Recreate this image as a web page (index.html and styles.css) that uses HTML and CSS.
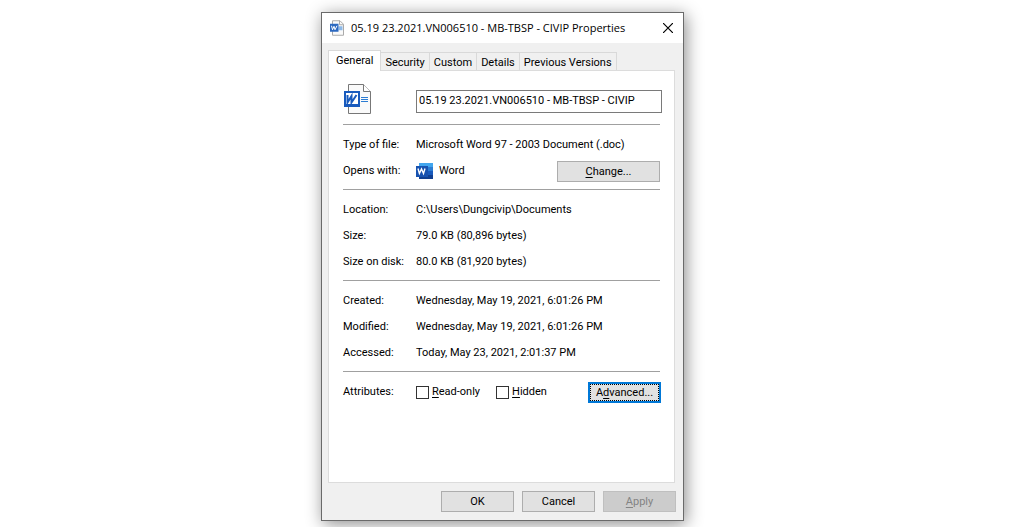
FILE: index.html
```html
<!DOCTYPE html>
<html lang="en">
<head>
    <meta charset="UTF-8">
    <meta name="viewport" content="width=device-width, initial-scale=1.0">
    <title>CIVIP Properties</title>
    <link rel="stylesheet" href="styles.css">
</head>
<body>
    <main class="dialog">
        <header class="titlebar">
            <svg class="title-icon" width="14" height="16" viewBox="0 0 28 31">
                <path d="M5 1h15l7 7v22H5z" fill="#fafafa" stroke="#aaa" stroke-width="2"/>
                <path d="M19 1v8h8" fill="none" stroke="#aaa" stroke-width="2"/>
                <path d="M17 12h8v8h-8z" fill="#8db9e8"/>
                <path d="M0 7h17v16H0z" fill="#2b68c0"/>
                <path d="M3 11l2 8 3-7 2 7 4-8" fill="none" stroke="#fff" stroke-width="2"/>
            </svg>
            <h1>05.19 23.2021.VN006510 - MB-TBSP - CIVIP Properties</h1>
            <button class="close" type="button" aria-label="Close">
                <svg width="10" height="10" viewBox="0 0 10 10">
                    <path d="M0 0l10 10M10 0L0 10" stroke="#000" stroke-width="1.2"/>
                </svg>
            </button>
        </header>

        <nav class="tabs">
            <button class="tab active" type="button">General</button>
            <button class="tab" type="button">Security</button>
            <button class="tab" type="button">Custom</button>
            <button class="tab" type="button">Details</button>
            <button class="tab" type="button">Previous Versions</button>
        </nav>

        <div class="panel">
            <div class="file">
                <svg class="file-icon" width="28" height="31" viewBox="0 0 28 31">
                    <path d="M5.500.5h15l7 7v22h-22z" fill="#fafafa" stroke="#777"/>
                    <path d="M20.500.5v7h7" fill="#fff" stroke="#777"/>
                    <path d="M18 13.500h7M18 15.500h7M18 17.500h7" stroke="#2b7cd3"/>
                    <path d="M1 7h16v16H1z" fill="#185abd"/>
                    <path d="M3 9h12v11H3z" fill="#fff"/>
                    <path d="M4.500 11v7.500l4-6.500v6.500L13.500 11" fill="none" stroke="#185abd" stroke-width="2"/>
                </svg>
                <input class="name" type="text" aria-label="File name" value="05.19 23.2021.VN006510 - MB-TBSP - CIVIP">
            </div>

            <section class="group">
                <div class="row">
                    <span class="label">Type of file:</span>
                    <span>Microsoft Word 97 - 2003 Document (.doc)</span>
                </div>
                <div class="row">
                    <span class="label">Opens with:</span>
                    <svg class="app-icon" width="17" height="16" viewBox="0 0 17 16">
                        <path d="M3 0h14v4H3z" fill="#41a5ee"/>
                        <path d="M3 4h14v4H3z" fill="#2b7cd3"/>
                        <path d="M3 8h14v4H3z" fill="#185abd"/>
                        <path d="M3 12h14v4H3z" fill="#103f91"/>
                        <path d="M0 3h12v11H0z" fill="#1752b0"/>
                        <path d="M2 5.500l1.400 5L5.500 6l2 4.500L9 5.500" fill="none" stroke="#fff" stroke-width="1.400"/>
                    </svg>
                    <span>Word</span>
                    <button class="btn change" type="button"><u>C</u>hange...</button>
                </div>
            </section>

            <section class="group">
                <div class="row">
                    <span class="label">Location:</span>
                    <span>C:\Users\Dungcivip\Documents</span>
                </div>
                <div class="row">
                    <span class="label">Size:</span>
                    <span>79.0 KB (80,896 bytes)</span>
                </div>
                <div class="row">
                    <span class="label">Size on disk:</span>
                    <span>80.0 KB (81,920 bytes)</span>
                </div>
            </section>

            <section class="group">
                <div class="row">
                    <span class="label">Created:</span>
                    <span>Wednesday, May 19, 2021, 6:01:26 PM</span>
                </div>
                <div class="row">
                    <span class="label">Modified:</span>
                    <span>Wednesday, May 19, 2021, 6:01:26 PM</span>
                </div>
                <div class="row">
                    <span class="label">Accessed:</span>
                    <span>Today, May 23, 2021, 2:01:37 PM</span>
                </div>
            </section>

            <section class="group">
                <div class="row">
                    <span class="label">Attributes:</span>
                    <label class="check"><input type="checkbox"><span><u>R</u>ead-only</span></label>
                    <label class="check"><input type="checkbox"><span><u>H</u>idden</span></label>
                    <button class="btn advanced" type="button"><span>A<u>d</u>vanced...</span></button>
                </div>
            </section>
        </div>

        <footer class="actions">
            <button class="btn" type="button">OK</button>
            <button class="btn" type="button">Cancel</button>
            <button class="btn" type="button" disabled><u>A</u>pply</button>
        </footer>
    </main>
</body>
</html>
```
FILE: styles.css
```css
* {
    box-sizing: border-box;
}
body {
    margin: 0;
    padding: 12px 21px 6px 0;
    background-color: white;
    color: black;
    font-family: Roboto, Arial, sans-serif;
    font-size: 11px;
    line-height: 14px;
}
button, input {
    font: inherit;
    color: inherit;
}
u {
    text-underline-offset: 2px;
}
.dialog {
    max-width: 363px;
    margin: 0 auto;
    border: 1px solid #6a6a6a;
    background-color: #f0f0f0;
    box-shadow: 2px 3px 16px rgba(0, 0, 0, 0.45);
}
.titlebar {
    display: flex;
    align-items: center;
    height: 30px;
    padding: 0 10px 0 8px;
    background-color: white;
}
.titlebar h1 {
    flex: 1;
    margin: 0 0 0 7px;
    font-family: "Open Sans", sans-serif;
    font-size: 11px;
    font-weight: normal;
    white-space: nowrap;
}
.close {
    display: flex;
    padding: 0;
    border: none;
    background: none;
}
.tabs {
    display: flex;
    align-items: flex-end;
    padding: 7px 7px 0 6px;
}
.tab {
    height: 18px;
    padding: 2px 4px 0;
    border: 1px solid #d9d9d9;
    border-left: none;
    border-bottom: none;
    background-color: #f0f0f0;
    white-space: nowrap;
}
.tab.active {
    height: 21px;
    padding: 0 7px;
    border-left: 1px solid #d9d9d9;
    background-color: white;
    margin-bottom: -1px;
    z-index: 1;
}
.panel {
    margin: 0 8px 0 6px;
    padding: 13px 14px 72px;
    border: 1px solid #dcdcdc;
    background-color: white;
}
.file {
    display: flex;
    align-items: flex-start;
    gap: 45px;
    height: 40px;
}
.file-icon, .app-icon {
    flex-shrink: 0;
}
.name {
    flex: 1;
    min-width: 0;
    height: 23px;
    margin: 6px -2px 0 0;
    padding: 0 2px 2px;
    border: 1px solid #7a7a7a;
}
.group {
    padding: 6px 0;
    border-top: 1px solid #a0a0a0;
}
.row {
    display: flex;
    align-items: center;
    height: 26px;
    padding-top: 2px;
    white-space: nowrap;
}
.label {
    width: 73px;
}
.app-icon {
    margin-right: 6px;
}
.btn {
    width: 73px;
    height: 21px;
    padding: 1px 0 0;
    border: 1px solid #adadad;
    background-color: #e1e1e1;
}
.btn:disabled {
    border-color: #bfbfbf;
    background-color: #cccccc;
    color: #838383;
}
.change {
    width: 103px;
    margin-left: auto;
}
.advanced {
    display: flex;
    margin: 0 -1px 0 auto;
    padding: 0;
    border: 2px solid #0078d7;
}
.advanced span {
    flex: 1;
    height: 17px;
    padding-top: 1px;
    border: 1px dotted black;
}
.check {
    display: flex;
    align-items: center;
    gap: 3px;
    margin-right: 16px;
}
.check input {
    appearance: none;
    width: 13px;
    height: 13px;
    margin: 0;
    border: 1px solid #333;
    background-color: white;
}
.check input:checked {
    background-color: #0078d7;
}
.actions {
    display: flex;
    justify-content: flex-end;
    gap: 8px;
    padding: 8px 7px;
}
```
